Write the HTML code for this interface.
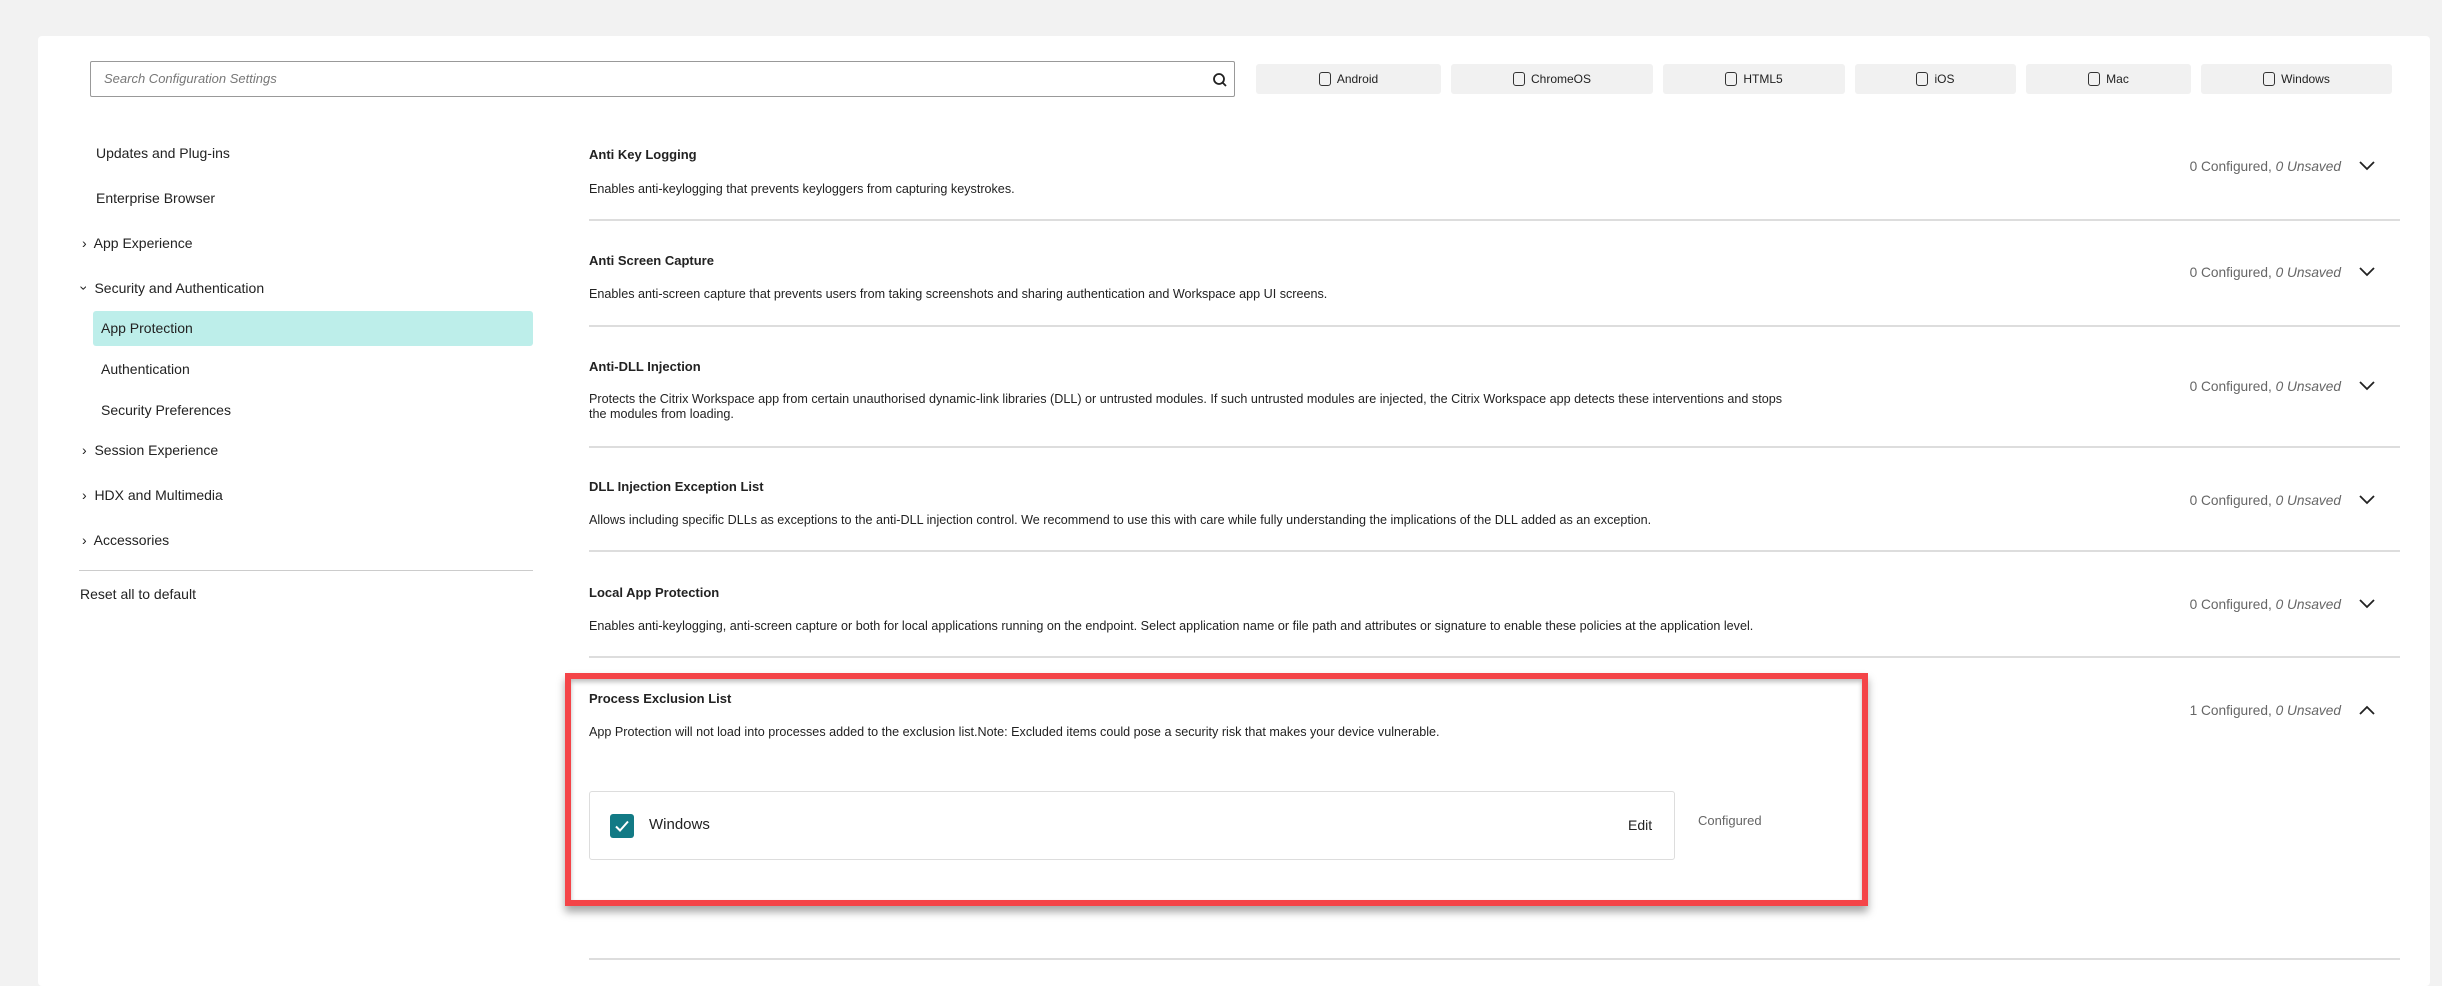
<!DOCTYPE html>
<html><head><meta charset="utf-8"><style>
*{margin:0;padding:0;box-sizing:border-box}
body{width:2442px;height:974px;background:#f2f2f2;font-family:"Liberation Sans",sans-serif;color:#222;position:relative;overflow:hidden}
.card{position:absolute;left:38px;top:36px;width:2392px;height:950px;background:#fff;border-radius:4px}
.a{position:absolute;white-space:nowrap}
.search{left:90px;top:61px;width:1145px;height:36px;border:1px solid #999;border-radius:2px}
.search span{position:absolute;left:13px;top:9px;font-style:italic;color:#777;font-size:13px}
.btn{top:64px;height:30px;background:#f1f1f1;border-radius:3px;font-size:12px;display:flex;align-items:center;justify-content:center;gap:6px}
.cb{width:12px;height:14px;border:1.5px solid #333;border-radius:3px;display:inline-block}
.nav{font-size:14px;color:#222}
.ttl{font-size:13px;font-weight:bold;left:589px}
.dsc{font-size:12.6px;left:589px;line-height:15px}
.hr{left:589px;width:1811px;height:2px;background:#ddd}
.st{font-size:13.7px;color:#666;right:101px}
.st i{font-style:italic}
</style></head><body>
<div class="card"></div>
<div class="a search"><span>Search Configuration Settings</span>
<svg style="position:absolute;right:6px;top:10px" width="16" height="16" viewBox="0 0 16 16"><circle cx="7" cy="7" r="5" fill="none" stroke="#222" stroke-width="1.8"/><path d="M10.5 10.5L14 14" stroke="#222" stroke-width="1.8"/></svg></div>
<div class="a btn" style="left:1256px;width:185px"><i class="cb"></i>Android</div>
<div class="a btn" style="left:1451px;width:202px"><i class="cb"></i>ChromeOS</div>
<div class="a btn" style="left:1663px;width:182px"><i class="cb"></i>HTML5</div>
<div class="a btn" style="left:1855px;width:161px"><i class="cb"></i>iOS</div>
<div class="a btn" style="left:2026px;width:165px"><i class="cb"></i>Mac</div>
<div class="a btn" style="left:2201px;width:191px"><i class="cb"></i>Windows</div>

<div class="a nav" style="left:96px;top:145px">Updates and Plug-ins</div>
<div class="a nav" style="left:96px;top:190px">Enterprise Browser</div>
<div class="a nav" style="left:82px;top:235px">›&nbsp; App Experience</div>
<div class="a nav" style="left:82px;top:280px"><span style="display:inline-block;transform:rotate(90deg)">›</span>&nbsp; Security and Authentication</div>
<div class="a" style="left:93px;top:311px;width:440px;height:35px;background:#bdeeea;border-radius:3px"></div>
<div class="a nav" style="left:101px;top:320px">App Protection</div>
<div class="a nav" style="left:101px;top:361px">Authentication</div>
<div class="a nav" style="left:101px;top:402px">Security Preferences</div>
<div class="a nav" style="left:82px;top:442px">›&nbsp; Session Experience</div>
<div class="a nav" style="left:82px;top:487px">›&nbsp; HDX and Multimedia</div>
<div class="a nav" style="left:82px;top:532px">›&nbsp; Accessories</div>
<div class="a" style="left:79px;top:570px;width:454px;height:1px;background:#ccc"></div>
<div class="a nav" style="left:80px;top:586px">Reset all to default</div>

<div class="a ttl" style="top:147px">Anti Key Logging</div>
<div class="a dsc" style="top:182px">Enables anti-keylogging that prevents keyloggers from capturing keystrokes.</div>
<div class="a st" style="top:159px">0 Configured, <i>0 Unsaved</i></div>
<div class="a hr" style="top:219px"></div>

<div class="a ttl" style="top:253px">Anti Screen Capture</div>
<div class="a dsc" style="top:287px">Enables anti-screen capture that prevents users from taking screenshots and sharing authentication and Workspace app UI screens.</div>
<div class="a st" style="top:265px">0 Configured, <i>0 Unsaved</i></div>
<div class="a hr" style="top:325px"></div>

<div class="a ttl" style="top:359px">Anti-DLL Injection</div>
<div class="a dsc" style="top:392px">Protects the Citrix Workspace app from certain unauthorised dynamic-link libraries (DLL) or untrusted modules. If such untrusted modules are injected, the Citrix Workspace app detects these interventions and stops<br>the modules from loading.</div>
<div class="a st" style="top:379px">0 Configured, <i>0 Unsaved</i></div>
<div class="a hr" style="top:446px"></div>

<div class="a ttl" style="top:479px">DLL Injection Exception List</div>
<div class="a dsc" style="top:513px">Allows including specific DLLs as exceptions to the anti-DLL injection control. We recommend to use this with care while fully understanding the implications of the DLL added as an exception.</div>
<div class="a st" style="top:493px">0 Configured, <i>0 Unsaved</i></div>
<div class="a hr" style="top:550px"></div>

<div class="a ttl" style="top:585px">Local App Protection</div>
<div class="a dsc" style="top:619px">Enables anti-keylogging, anti-screen capture or both for local applications running on the endpoint. Select application name or file path and attributes or signature to enable these policies at the application level.</div>
<div class="a st" style="top:597px">0 Configured, <i>0 Unsaved</i></div>
<div class="a hr" style="top:656px"></div>

<div class="a ttl" style="top:691px">Process Exclusion List</div>
<div class="a dsc" style="top:725px">App Protection will not load into processes added to the exclusion list.Note: Excluded items could pose a security risk that makes your device vulnerable.</div>
<div class="a st" style="top:703px">1 Configured, <i>0 Unsaved</i></div>

<svg class="a" style="left:2359px;top:161px" width="16" height="10" viewBox="0 0 16 10"><path d="M1 1L8 8L15 1" fill="none" stroke="#222" stroke-width="1.8"/></svg>
<svg class="a" style="left:2359px;top:267px" width="16" height="10" viewBox="0 0 16 10"><path d="M1 1L8 8L15 1" fill="none" stroke="#222" stroke-width="1.8"/></svg>
<svg class="a" style="left:2359px;top:381px" width="16" height="10" viewBox="0 0 16 10"><path d="M1 1L8 8L15 1" fill="none" stroke="#222" stroke-width="1.8"/></svg>
<svg class="a" style="left:2359px;top:495px" width="16" height="10" viewBox="0 0 16 10"><path d="M1 1L8 8L15 1" fill="none" stroke="#222" stroke-width="1.8"/></svg>
<svg class="a" style="left:2359px;top:599px" width="16" height="10" viewBox="0 0 16 10"><path d="M1 1L8 8L15 1" fill="none" stroke="#222" stroke-width="1.8"/></svg>
<svg class="a" style="left:2359px;top:705px" width="16" height="10" viewBox="0 0 16 10"><path d="M1 9L8 2L15 9" fill="none" stroke="#222" stroke-width="1.8"/></svg>

<div class="a" style="left:589px;top:791px;width:1086px;height:69px;border:1px solid #ddd;border-radius:3px"></div>
<div class="a" style="left:610px;top:814px;width:24px;height:24px;background:#127a85;border-radius:3px"><svg width="24" height="24" viewBox="0 0 24 24"><path d="M6 12.5L10 16.5L18 7.5" fill="none" stroke="#fff" stroke-width="2"/></svg></div>
<div class="a" style="left:649px;top:816px;font-size:15px">Windows</div>
<div class="a" style="left:1628px;top:817px;font-size:14px">Edit</div>
<div class="a" style="left:1698px;top:813px;font-size:13px;color:#666">Configured</div>

<div class="a" style="left:565px;top:673px;width:1303px;height:233px;border:6px solid #f44448;box-shadow:0 6px 8px rgba(0,0,0,.35), inset 0 3px 5px rgba(0,0,0,.25)"></div>
<div class="a hr" style="top:958px"></div>
</body></html>
